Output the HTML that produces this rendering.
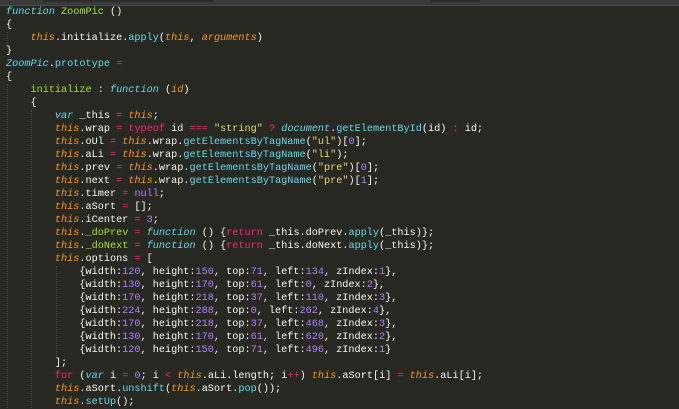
<!DOCTYPE html>
<html><head><meta charset="utf-8"><style>
html,body{margin:0;padding:0;}
body{width:679px;height:408px;overflow:hidden;background:#272822;position:relative;font-family:"Liberation Mono",monospace;}
.top{position:absolute;left:0;top:0;width:679px;height:5px;background:#3a3a38;border-bottom:1px solid #4a4a48;}
.top i{position:absolute;top:0;height:2px;background:#2c2c2a;}
pre{position:absolute;left:6px;top:6px;margin:0;font-size:10.2px;line-height:13px;color:#f8f8f2;white-space:pre;}
.k{color:#f92672}.s{color:#66d9ef;font-style:italic}.f{color:#a6e22e}.t{color:#fd971f;font-style:italic}
.q{color:#e6db74}.n{color:#ae81ff}.c{color:#66d9ef}.p{color:#fd971f;font-style:italic}
.g{position:absolute;width:0;border-left:1px dotted #464741;}
</style></head><body>
<div class="top"><i style="left:43px;width:170px"></i><i style="left:430px;width:50px"></i></div>
<div class="g" style="left:7px;top:32px;height:13px"></div>
<div class="g" style="left:7px;top:84px;height:324px"></div>
<div class="g" style="left:31px;top:110px;height:298px"></div>
<div class="g" style="left:56px;top:266px;height:90px"></div>
<pre><span class="s">function</span> <span class="f">ZoomPic</span> ()
{
    <span class="t">this</span>.initialize.<span class="c">apply</span>(<span class="t">this</span>, <span class="p">arguments</span>)
}
<span class="s">ZoomPic</span>.<span class="c">prototype</span> <span class="k">=</span>
{
    <span class="f">initialize</span> : <span class="s">function</span> (<span class="p">id</span>)
    {
        <span class="s">var</span> _this <span class="k">=</span> <span class="t">this</span>;
        <span class="t">this</span>.wrap <span class="k">=</span> <span class="k">typeof</span> id <span class="k">===</span> <span class="q">"string"</span> <span class="k">?</span> <span class="s">document</span>.<span class="c">getElementById</span>(id) <span class="k">:</span> id;
        <span class="t">this</span>.oUl <span class="k">=</span> <span class="t">this</span>.wrap.<span class="c">getElementsByTagName</span>(<span class="q">"ul"</span>)[<span class="n">0</span>];
        <span class="t">this</span>.aLi <span class="k">=</span> <span class="t">this</span>.wrap.<span class="c">getElementsByTagName</span>(<span class="q">"li"</span>);
        <span class="t">this</span>.prev <span class="k">=</span> <span class="t">this</span>.wrap.<span class="c">getElementsByTagName</span>(<span class="q">"pre"</span>)[<span class="n">0</span>];
        <span class="t">this</span>.next <span class="k">=</span> <span class="t">this</span>.wrap.<span class="c">getElementsByTagName</span>(<span class="q">"pre"</span>)[<span class="n">1</span>];
        <span class="t">this</span>.timer <span class="k">=</span> <span class="n">null</span>;
        <span class="t">this</span>.aSort <span class="k">=</span> [];
        <span class="t">this</span>.iCenter <span class="k">=</span> <span class="n">3</span>;
        <span class="t">this</span>.<span class="f">_doPrev</span> <span class="k">=</span> <span class="s">function</span> () {<span class="k">return</span> _this.doPrev.<span class="c">apply</span>(_this)};
        <span class="t">this</span>.<span class="f">_doNext</span> <span class="k">=</span> <span class="s">function</span> () {<span class="k">return</span> _this.doNext.<span class="c">apply</span>(_this)};
        <span class="t">this</span>.options <span class="k">=</span> [
            {width:<span class="n">120</span>, height:<span class="n">150</span>, top:<span class="n">71</span>, left:<span class="n">134</span>, zIndex:<span class="n">1</span>},
            {width:<span class="n">130</span>, height:<span class="n">170</span>, top:<span class="n">61</span>, left:<span class="n">0</span>, zIndex:<span class="n">2</span>},
            {width:<span class="n">170</span>, height:<span class="n">218</span>, top:<span class="n">37</span>, left:<span class="n">110</span>, zIndex:<span class="n">3</span>},
            {width:<span class="n">224</span>, height:<span class="n">288</span>, top:<span class="n">0</span>, left:<span class="n">262</span>, zIndex:<span class="n">4</span>},
            {width:<span class="n">170</span>, height:<span class="n">218</span>, top:<span class="n">37</span>, left:<span class="n">468</span>, zIndex:<span class="n">3</span>},
            {width:<span class="n">130</span>, height:<span class="n">170</span>, top:<span class="n">61</span>, left:<span class="n">620</span>, zIndex:<span class="n">2</span>},
            {width:<span class="n">120</span>, height:<span class="n">150</span>, top:<span class="n">71</span>, left:<span class="n">496</span>, zIndex:<span class="n">1</span>}
        ];
        <span class="k">for</span> (<span class="s">var</span> i <span class="k">=</span> <span class="n">0</span>; i <span class="k">&lt;</span> <span class="t">this</span>.aLi.length; i<span class="k">++</span>) <span class="t">this</span>.aSort[i] <span class="k">=</span> <span class="t">this</span>.aLi[i];
        <span class="t">this</span>.aSort.<span class="c">unshift</span>(<span class="t">this</span>.aSort.<span class="c">pop</span>());
        <span class="t">this</span>.<span class="c">setUp</span>();
</pre>
</body></html>
